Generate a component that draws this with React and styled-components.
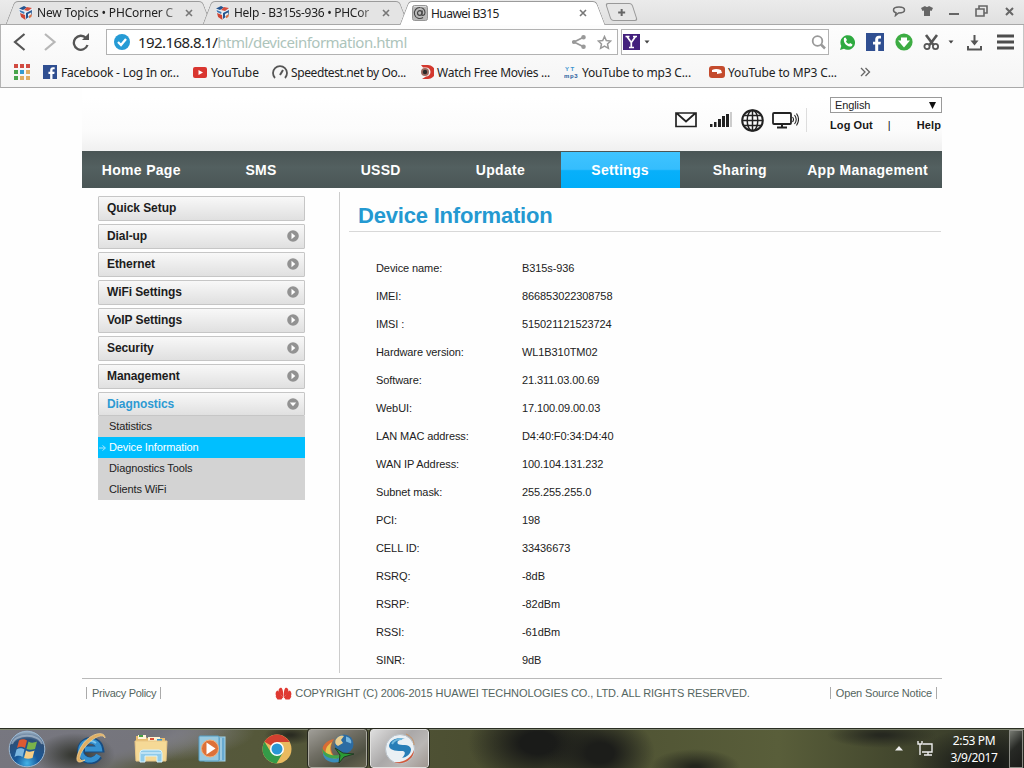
import React from 'react';
import styled, { createGlobalStyle, css } from 'styled-components';

const Global = createGlobalStyle`
  * { box-sizing: border-box; }
  body { margin: 0; background: #fff; overflow: hidden; }
  svg { display: block; flex: none; }
`;

const Screen = styled.div`
  width: 1024px; height: 768px; display: flex; flex-direction: column;
  background: #fefefe; font-family: "Liberation Sans", Arial, sans-serif; color: #222;
  white-space: nowrap;
`;

/* ---------- browser window ---------- */
const ui = css`font-family: "Noto Sans", "Open Sans", sans-serif;`;

const TabStrip = styled.div`
  ${ui}
  height: 25px; flex: none; display: flex; align-items: flex-start; padding-left: 10px;
  background: linear-gradient(#ebebeb, #e0e0e0); border-bottom: 1px solid #a8a8a8;
`;
const Tab = styled.div`
  position: relative; z-index: ${p => (p.$active ? 2 : 1)};
  width: 197px; height: ${p => (p.$active ? 25 : 24)}px; flex: none;
  display: flex; align-items: center; padding: 1px 14px 0 8px;
  font-size: 12px; letter-spacing: ${p => p.$ls || 0}px; color: #222;
  &::before, &::after {
    content: ""; position: absolute; z-index: -1; top: 1px; bottom: 0; border-top: 1px solid #9b9b9b;
    background: ${p => (p.$active ? '#fff' : '#e4e4e4')};
  }
  &::before { left: 0; right: 40%; transform: skewX(-21deg); border-left: 1px solid #9b9b9b; border-top-left-radius: 4px; }
  &::after { right: 0; left: 40%; transform: skewX(21deg); border-right: 1px solid #9b9b9b; border-top-right-radius: 4px; }
`;
const TabTitle = styled.span`
  margin-left: 3px; flex: 1; overflow: hidden;
  ${p => p.$fade && css`
    mask-image: linear-gradient(90deg, #000 83%, rgba(0,0,0,.3) 96%, transparent);
  `}
`;
const NewTab = styled.div`
  width: 27px; height: 18px; margin: 3px 0 0 7px; border: 1px solid #999; border-radius: 3px;
  transform: skewX(18deg); background: #e6e6e6; display: grid; place-items: center;
  svg { transform: skewX(-18deg); }
`;
const WindowButtons = styled.div`
  margin-left: auto; display: flex; align-items: center; gap: 15px; padding: 5px 7px 0 0;
`;
const Toolbar = styled.div`
  ${ui}
  height: 63px; flex: none; background: linear-gradient(#fdfdfd, #f5f5f5);
  border-left: 1px solid #b4b4b4; border-right: 1px solid #c6c6c6; border-bottom: 1px solid #a9a9a9;
`;
const NavRow = styled.div`
  height: 34px; display: flex; align-items: center; padding-left: 11px;
`;
const NavButtons = styled.div`display: flex; gap: 14px; width: 94px;`;
const Field = styled.div`
  width: ${p => p.$w}px; height: 26px; flex: none; margin-right: ${p => p.$mr}px;
  border: 1px solid #b2b2b2; background: #fff; display: flex; align-items: center; padding: 0 ${p => p.$pr || 5}px 0 ${p => p.$pl}px;
`;
const Url = styled.span`
  font-size: 15px; margin-left: 8px; flex: 1; letter-spacing: -.58px; color: #222;
  span { color: #adc4bb; letter-spacing: -.5px; }
`;
const FieldActions = styled.div`display: flex; align-items: center; gap: 11px;`;
const EngineCaret = styled.div`flex: 1; padding-left: 4px;`;
const ToolIcons = styled.div`display: flex; align-items: center; flex: 1; padding-left: 3px;`;
const Slot = styled.span`width: ${p => p.$w}px; flex: none; display: flex;`;
const Bookmarks = styled.div`
  height: 26px; display: flex; align-items: center; padding-left: 12px; font-size: 12px; color: #222;
`;
const Bookmark = styled.div`
  width: ${p => p.$w}px; flex: none; display: flex; align-items: center; gap: ${p => p.$gap || 4}px;
  letter-spacing: ${p => p.$ls || 0}px;
`;

/* ---------- router page ---------- */
const Page = styled.main`width: 860px; height: 640px; flex: none; margin-left: 82px; display: flex; flex-direction: column;`;
const Header = styled.header`
  height: 63px; flex: none; display: flex; justify-content: flex-end;
  background: linear-gradient(#fff 15%, #fbfbfb 70%, #f0f0f0);
`;
const StatusIcons = styled.div`
  display: flex; align-items: center; width: 132px; height: 24px; margin: 20px 23px 0 0; border-right: 1px solid #ddd;
`;
const HeaderLinks = styled.div`width: 112px; padding-top: 9px;`;
const Select = styled.div`
  height: 16px; border: 1px solid #9a9a9a; display: flex; align-items: center; justify-content: space-between;
  padding: 0 5px 0 4px; font-size: 11px; letter-spacing: -.1px; color: #222; background: #fff;
`;
const LinkLine = styled.div`
  display: flex; justify-content: space-between; font-size: 11px; font-weight: bold; color: #181818;
  margin-top: 6px; padding-right: 1px; letter-spacing: .1px;
  i { font-style: normal; font-weight: normal; margin: 0 10px 0 -1px; }
`;
const Menu = styled.nav`
  height: 37px; flex: none; display: flex; background: linear-gradient(#4a5555, #536060 45%, #4a5656);
`;
const MenuItem = styled.div`
  width: ${p => p.$w || 119.7}px; display: flex; align-items: center; justify-content: center; padding-right: 1px;
  font-size: 14px; font-weight: bold; color: #fff; letter-spacing: .3px;
  ${p => p.$active && css`margin-top: 1px; background: linear-gradient(#3fc4ff, #35bdfd 48%, #08b0fa 52%, #00adf8);`}
`;
const Body = styled.div`height: 485px; flex: none; display: flex; padding-top: 4px;`;
const Sidebar = styled.aside`
  width: 258px; height: 481px; flex: none; border-right: 1px solid #ccc; padding: 4px 34px 0 16px;
`;
const SideItem = styled.div`
  height: ${p => (p.$open ? 24 : 25)}px; margin-bottom: ${p => (p.$open ? 0 : 3)}px; border: 1px solid #c6c6c6; border-radius: 1px;
  background: linear-gradient(#f8f8f8, #e0e0e0);
  display: flex; align-items: center; justify-content: space-between; padding: 0 5px ${p => (p.$open ? 0 : 1)}px 8px;
  font-size: 12px; font-weight: bold; letter-spacing: -.08px; color: ${p => (p.$open ? '#2d9ad3' : '#1c1c1c')};
`;
const SubItem = styled.div`
  position: relative; height: 21px; background: ${p => (p.$active ? '#00bfff' : '#d3d3d3')};
  color: ${p => (p.$active ? '#fff' : '#222')}; font-size: 11px; letter-spacing: -.12px; line-height: 21px; padding-left: 11px;
  svg { position: absolute; left: 1px; top: 7px; }
`;
const Content = styled.section`flex: 1; padding: 0 1px 0 9px;`;
const Title = styled.h1`
  margin: 0; height: 40px; line-height: 48px; padding-left: 9px; border-bottom: 1px solid #d8d8d8;
  font-size: 22px; color: #2499d1; letter-spacing: -.2px;
`;
const Info = styled.dl`
  margin: 22px 0 0 27px; display: grid; grid-template-columns: 146px 1fr; grid-auto-rows: 28px;
  align-items: center; font-size: 11px; letter-spacing: -.09px; color: #222;
  dt, dd { margin: 0; }
`;
const Footer = styled.footer`
  margin-top: 5px; height: 29px; border-top: 1px solid #b9b9b9; display: flex; align-items: center;
  padding: 0 5px 0 4px; font-size: 11px; color: #55655f;
`;
const FooterLink = styled.span`
  border: solid #aaa; border-width: 0 1px; padding: 0 4px 0 5px; line-height: 12px; letter-spacing: ${p => p.$ls}px;
`;
const Copyright = styled.span`
  flex: 1; display: flex; align-items: center; gap: 3px; padding-left: 114px; letter-spacing: -.08px;
`;

/* ---------- taskbar ---------- */
const Taskbar = styled.div`
  height: 40px; flex: none; display: flex; align-items: center; border-top: 1px solid #2b2e24;
  box-shadow: inset 0 1px #838975;
  background:
    radial-gradient(ellipse 55px 40px at 600px 24px, #1c1d1a 25%, transparent),
    radial-gradient(ellipse 70px 44px at 538px 14px, #1a1b19 25%, transparent),
    radial-gradient(ellipse 75px 38px at 985px 36px, #191b18 20%, transparent),
    radial-gradient(ellipse 55px 13px at 882px 6px, #262820 10%, transparent),
    radial-gradient(ellipse 45px 18px at 695px 38px, #24261d 10%, transparent),
    radial-gradient(ellipse 26px 10px at 290px 6px, #2b2c22 10%, transparent),
    radial-gradient(ellipse 40px 22px at 75px 26px, #373933 10%, transparent),
    linear-gradient(155deg, #777780 0, #75757c 70px, transparent 100px),
    radial-gradient(ellipse 120px 32px at 135px 2px, #85858a 35%, transparent),
    linear-gradient(90deg, #5a5a43, #55583a 25%, #4a4d30 50%, #595e3a 76%, #42462d 88%, #33362a);
`;
const TaskSlot = styled.div`width: ${p => p.$w}px; height: 40px; flex: none; display: grid; place-items: center;`;
const TaskButton = styled.div`
  width: 59px; height: 39px; flex: none; margin-right: 3px; border: 1px solid ${p => (p.$active ? '#e0e0de' : '#aaa99e')};
  outline: 1px solid #27281f; outline-offset: 0; border-radius: 3px; display: grid; place-items: center;
  background: ${p => (p.$active
    ? 'linear-gradient(135deg, #dedede, #aaa8a8 45%, #bab7b5 70%, #9f9690)'
    : 'linear-gradient(150deg, #a09e98, #716f65 40%, #4f5142 75%, #676550)')};
`;
const Tray = styled.div`margin-left: auto; display: flex; align-items: center; height: 39px;`;
const TrayCaret = styled.div`width: 22px;`;
const Clock = styled.div`
  ${ui}
  width: 70px; text-align: center; color: #fff; font-size: 12px; line-height: 17px; letter-spacing: -.4px; margin: 1px 0 0 4px;
`;
const ShowDesktop = styled.div`
  width: 14px; height: 38px; margin-right: 1px; border: 1px solid #8c8d86; background: linear-gradient(135deg, #777a72, #272925 45%, #1a1b18);
`;

/* ---------- icons ---------- */
const Cube = () => (
  <svg width="16" height="16" viewBox="0 0 16 16">
    <path d="M1 4 8 1l7 2-1 9-6 3-6-3z" fill="#e8edf3" />
    <path d="M1 3.5 6 1l3 1.5L5 5zM8 8l6-3-.5 5L8 14z" fill="#24548f" />
    <path d="m9 2 5 1-4 3-4-1z" fill="#d7503f" /><path d="m2 8 5 2 .5 5L3 12z" fill="#ce4634" />
    <path d="m1.5 5 5 2-.4 2-4-2z" fill="#3f79b4" /><path d="m10 9 3-1.500v2L10 12z" fill="#eee" />
    <path d="m11 11 3-2-.6 3-2.400 1.200z" fill="#dc7142" />
  </svg>
);
const AtIcon = () => (
  <svg width="16" height="16" viewBox="0 0 16 16" fill="none">
    <rect x=".5" y=".5" width="15" height="15" rx="2" fill="#b9b9b9" stroke="#969696" />
    <circle cx="7.800" cy="8" r="2.300" stroke="#444" strokeWidth="1.200" />
    <path d="M10.300 5.500 9.800 9.500c0 1.800 3.200 1 3.200-2C13 4.500 10.700 2.500 8 2.500a5.500 5.500 0 1 0 3 10" stroke="#444" strokeWidth="1.100" />
    <path d="M2 1.500h12" stroke="#ddd" />
  </svg>
);
const Close = () => (
  <svg width="8" height="8" viewBox="0 0 8 8"><path d="m1 1 6 6M7 1 1 7" stroke="#777" strokeWidth="1.6" /></svg>
);
const FbIcon = ({ s }) => (
  <svg width={s} height={s} viewBox="0 0 18 18">
    <rect width="18" height="18" fill="#304f91" />
    <path d="M9.200 18v-6.500H7V8.700h2.200V6.600c0-2.500 1.400-3.800 3.700-3.800H15v2.600h-1.400c-1.100 0-1.400.5-1.400 1.400v1.900h2.700l-.4 2.800h-2.300V18z" fill="#fff" />
  </svg>
);
const Caret = () => <svg width="6" height="4" viewBox="0 0 6 4"><path d="M.5.5h5L3 3.500z" fill="#444" /></svg>;
const Arrow = ({ down }) => (
  <svg width="12" height="12" viewBox="0 0 12 12"><circle cx="6" cy="6" r="5.800" fill="#929292" />
    <path d={down ? 'M2.800 4.500h6.400L6 8.300z' : 'M4.500 2.800v6.400L8.300 6z'} fill="#fff" /></svg>
);
const MediaPlayer = () => (
  <svg width="28" height="28" viewBox="0 0 28 28">
    <rect x="7" y="2" width="20" height="24" fill="#68a9cf" stroke="#a6d5ea" />
    <path d="M23 3v22" stroke="#d2eaf2" /><rect x="1" y="1" width="20" height="25" rx="1" fill="#99c9df" stroke="#549ec4" />
    <circle cx="12" cy="13.500" r="8.500" fill="#dd7138" stroke="#f1b07a" /><path d="m8.500 7.500 9 6-9 6z" fill="#fff" />
  </svg>
);
const Explorer = () => (
  <svg width="34" height="31" viewBox="0 0 34 31">
    <path d="M2 3h9l2 2h18v22H2z" fill="#e8bd70" /><path d="M4 2h8v4H4z" fill="#fff5da" /><path d="M5 2h4v2H5z" fill="#47a146" />
    <path d="M14 4h12v4H14z" fill="#fff3d0" /><path d="M16 5h4v2h-4z" fill="#d85138" /><path d="M23 6h5v2h-5z" fill="#3693cf" />
    <path d="M1 8h32l-1 20H2z" fill="#f5d996" stroke="#e9c786" /><path d="M6 29V20q0-3 3-3h16q3 0 3 3v9h-5v-6H11v6z" fill="#90cbea" stroke="#d8f3fc" />
    <path d="M7 20h20" stroke="#eaf9ff" />
  </svg>
);
const IE = () => (
  <svg width="34" height="34" viewBox="0 0 34 34" fill="none">
    <path d="M27 24a10 10 0 1 1 1.500-7H12" stroke="#174c82" strokeWidth="7" />
    <path d="M26.500 23a9.500 9.500 0 1 1 1-6H13" stroke="#3691d0" strokeWidth="5" />
    <path d="M12 11a10 10 0 0 1 12 0" stroke="#7cc4ec" strokeWidth="2" />
    <path d="M33 6C33-2 17 1 9 15 3 26 3 34 13 28 6 30 6 24 13 15 21 5 31 1 33 6" fill="#e0ae62" stroke="#f2cf90" strokeWidth=".8" />
  </svg>
);
const Start = () => (
  <svg width="38" height="38" viewBox="0 0 38 38">
    <defs><radialGradient id="orb" cx=".5" cy=".9" r=".9"><stop offset="0" stopColor="#44b3e8" /><stop offset=".35" stopColor="#17599b" /><stop offset=".75" stopColor="#2d4f78" /><stop offset="1" stopColor="#a5b8c9" /></radialGradient></defs>
    <circle cx="19" cy="19" r="17.800" fill="url(#orb)" stroke="#9bb9d4" />
    <path d="M11 10.500c3-2 6-1 8 0l-2 7.500c-3-2-6-1-8 0z" fill="#dd5a32" /><path d="M20.500 11.500c3 2 6 1 8.500 0l-2 7.500c-3 1-6 1-8.500 0z" fill="#79b24b" />
    <path d="M8.500 19.500c3-2 6-1 8 0l-2 7.500c-3-2-6-1-8 0z" fill="#7bb6df" /><path d="M18 20.500c3 2 6 1 8.500 0l-2 7.500c-3 1-6 1-8.500 0z" fill="#f6cd84" />
    <path d="M4 14C7 3 31 3 34 14" fill="none" stroke="#cbd8e1" strokeOpacity=".5" strokeWidth="2" />
  </svg>
);
const Chrome = () => (
  <svg width="30" height="30" viewBox="0 0 30 30">
    <circle cx="15" cy="15" r="14.500" fill="#e9ba60" />
    <path d="M15 15 2.500 7.700A14.500 14.500 0 0 1 27.600 8H15z" fill="#d2402f" />
    <path d="M2.500 7.700A14.500 14.500 0 0 0 14.500 29.500L21 18.500 15 15 9 18.500z" fill="#349a48" />
    <circle cx="15" cy="15" r="7" fill="#fff" /><circle cx="15" cy="15" r="5.500" fill="#2a97d4" />
  </svg>
);
const Idm = () => (
  <svg width="34" height="30" viewBox="0 0 34 30">
    <path d="M13 5C2 7-1 16 3 22c3 5 10 6 15 4-7-4-11-12-5-21" fill="#d86c35" />
    <path d="M11 8C5 12 3 17 6 22c3 4 8 5 12 4-8-4-11-10-7-18" fill="#e9c44f" />
    <path d="M2 17c2 6 9 8 16 7v4C8 30 1 25 2 17" fill="#398ebc" /><path d="M1 14c3 6 9 8 17 7v3C8 26 1 22 1 14" fill="#41a44d" />
    <circle cx="23" cy="10" r="9.500" fill="#2c6ca3" /><path d="M14.500 6c3-5 7-5 8.500-4l-3 4 2 3-5 3c-3-2-3-3-2.500-6" fill="#e8ce91" />
    <path d="M25 2.500c4 1 6 4 5 7l-5-2z" fill="#79b8e0" />
    <path d="m14 14 8 5 11 1-10 3-5 6 1-8z" fill="#2b9a34" stroke="#203c24" />
  </svg>
);
const Ball = () => (
  <svg width="32" height="32" viewBox="0 0 32 32">
    <circle cx="16" cy="16" r="14.500" fill="#eaf0f4" stroke="#b9c1c8" />
    <path d="M5 13C6 6 14 4 21 6c-5 0-9 2-7 5 2 2 12-1 13 5 0 5-4 8-9 9 3-3 4-6 1-7-5 0-13 0-14-5" fill="#287eb7" />
    <path d="M8 11c2-4 7-5 10-5" stroke="#71b9dd" strokeWidth="2" fill="none" />
    <path d="M30 17c0 10-12 16-20 12 10 1 17-4 20-12" fill="#d05b3d" /><path d="M22 1c5 2 8 6 8 11" stroke="#c89264" fill="none" />
  </svg>
);
const Huawei = () => (
  <svg width="17" height="13" viewBox="0 0 17 13" fill="#df3932">
    <path d="M8.200 10.500C8.500 5 7.500 1.200 6.200.8 4 .8 3 3 4 5.500zM8.800 10.500C8.500 5 9.500 1.200 10.800.8 13 .8 14 3 13 5.500z" />
    <path d="M8 11C6 7 4 4 2.200 3.500-.2 5.500 0 9.500 3.500 11zM9 11C11 7 13 4 14.800 3.500c2.400 2 2.200 6-1.300 7.500z" />
    <path d="M8 10 4 8 .5 9.500 2.500 12.500H6.500zM9 10l4-2 3.500 1.500-2 3H10.500z" />
  </svg>
);

const sections = ['Quick Setup', 'Dial-up', 'Ethernet', 'WiFi Settings', 'VoIP Settings', 'Security', 'Management'];
const details = [
  ['Device name:', 'B315s-936'], ['IMEI:', '866853022308758'], ['IMSI :', '515021121523724'],
  ['Hardware version:', 'WL1B310TM02'], ['Software:', '21.311.03.00.69'], ['WebUI:', '17.100.09.00.03'],
  ['LAN MAC address:', 'D4:40:F0:34:D4:40'], ['WAN IP Address:', '100.104.131.232'], ['Subnet mask:', '255.255.255.0'],
  ['PCI:', '198'], ['CELL ID:', '33436673'], ['RSRQ:', '-8dB'], ['RSRP:', '-82dBm'], ['RSSI:', '-61dBm'], ['SINR:', '9dB'],
];

export default function App() {
  return (
    <Screen>
      <Global />
      <TabStrip>
        <Tab $ls={-0.17}><Cube /><TabTitle $fade>New Topics • PHCorner C</TabTitle><Close /></Tab>
        <Tab $ls={-0.28}><Cube /><TabTitle $fade>Help - B315s-936 • PHCor</TabTitle><Close /></Tab>
        <Tab $active $ls={-0.55}><AtIcon /><TabTitle>Huawei B315</TabTitle><Close /></Tab>
        <NewTab><svg width="9" height="9"><path d="M4.500 1v7M1 4.500h7" stroke="#666" strokeWidth="2" /></svg></NewTab>
        <WindowButtons>
          <svg width="14" height="12" fill="none"><path d="M7 2C3 2 1.500 3.500 1.500 5S3 7.500 4 7.800L3.500 10.500l3-2.500C10 8 12.500 7 12.500 5S10 2 7 2z" stroke="#666" strokeWidth="1.500" /></svg>
          <svg width="12" height="12" fill="#666"><path d="M4 1q2 2 4 0l4 2-1.500 3-1.500-.5V11H3V5.500L1.500 6 0 3z" /></svg>
          <svg width="12" height="12"><path d="M1 9h10" stroke="#666" strokeWidth="2" /></svg>
          <svg width="13" height="12" fill="none" stroke="#666" strokeWidth="1.600"><path d="M4 4V1h8v7H9M1 4h8v7H1z" /></svg>
          <svg width="14" height="12"><path d="m3 3 7 7M10 3l-7 7" stroke="#666" strokeWidth="2" /></svg>
        </WindowButtons>
      </TabStrip>

      <Toolbar>
        <NavRow>
          <NavButtons>
            <svg width="14" height="18" fill="none"><path d="M12.500 1 3 9l9.500 8" stroke="#555" strokeWidth="2.200" /></svg>
            <svg width="18" height="18" fill="none"><path d="m5 1 9.500 8L5 17" stroke="#b7b7b7" strokeWidth="2.200" /></svg>
            <svg width="18" height="18" fill="none"><path d="M14 5A7 7 0 1 0 15.500 12" stroke="#555" strokeWidth="2.300" /><path d="M10 7h7V0z" fill="#555" /></svg>
          </NavButtons>
          <Field $w={512} $mr={3} $pl={7} $pr={5}>
            <svg width="16" height="16"><circle cx="8" cy="8" r="8" fill="#269bd5" /><path d="m4 8 3 3 5-6" fill="none" stroke="#fff" strokeWidth="2.300" /></svg>
            <Url>192.168.8.1/<span>html/deviceinformation.html</span></Url>
            <FieldActions>
              <svg width="14" height="14" stroke="#999" fill="#999" strokeWidth="1.800"><path d="M12 2 2 7l10 5" fill="none" /><circle cx="11.500" cy="2.300" r="1.400" /><circle cx="2" cy="7" r="1.200" /><circle cx="11.500" cy="11.700" r="1.400" /></svg>
              <svg width="15" height="15" fill="none"><path d="m7.500 1.500 1.800 4 4.400.5-3.200 3 .9 4.400-3.900-2.200-3.900 2.200.9-4.400-3.200-3 4.400-.5z" stroke="#999" strokeWidth="1.500" /></svg>
            </FieldActions>
          </Field>
          <Field $w={208} $mr={7} $pl={1} $pr={2}>
            <svg width="17" height="16" viewBox="0 0 17 16"><rect width="17" height="16" fill="#43207d" /><path d="M2.500 2.500h4M10 2.500h4M4 2.500l4.300 6v5M12.500 2.500l-4.200 6M6 13.500h5" fill="none" stroke="#fff" strokeWidth="1.700" /></svg>
            <EngineCaret><Caret /></EngineCaret>
            <svg width="15" height="15" fill="none" stroke="#999"><circle cx="6.500" cy="6" r="4.800" strokeWidth="1.800" /><path d="m10 9.500 4 4" strokeWidth="2.500" /></svg>
          </Field>
          <ToolIcons>
            <Slot $w={27}><svg width="17" height="17"><path d="M1 16 2.300 12A7.300 7.300 0 1 1 5 14.800z" fill="#2eaa40" /><path d="M5 4 6.500 3.500 8 6 7 7.200C7.500 8.500 8.500 9.500 10 10l1.200-1 2.300 1.500c0 1.500-1.500 2.300-2.700 2C7 12 4 8.500 5 4" fill="#fff" /></svg></Slot>
            <Slot $w={29}><FbIcon s={18} /></Slot>
            <Slot $w={28}><svg width="18" height="18"><circle cx="9" cy="9" r="8.600" fill="#3dac43" /><path d="M6 4.500h6v3h3l-6 7-6-7h3z" fill="#fff" /></svg></Slot>
            <Slot $w={25}><svg width="17" height="17" fill="none" stroke="#555"><path d="m3 1 7.500 10M14 1 6.500 11" strokeWidth="2.600" /><circle cx="4" cy="12.500" r="2.600" strokeWidth="1.800" /><circle cx="12.500" cy="12.500" r="2.600" strokeWidth="1.800" /></svg></Slot>
            <Slot $w={19}><Caret /></Slot>
            <Slot $w={30}><svg width="15" height="17" stroke="#555" strokeWidth="2" fill="none"><path d="M7.500 1v9M1 12v3.500h13V12" /><path d="M3.500 6.500h8l-4 5z" fill="#555" stroke="none" /></svg></Slot>
            <svg width="17" height="16"><path d="M0 2h17M0 8h17M0 14h17" stroke="#4d4d4d" strokeWidth="2.800" /></svg>
          </ToolIcons>
        </NavRow>
        <Bookmarks>
          <Bookmark $w={30}><svg width="18" height="18" viewBox="0 0 18 18">{['#d14b42', '#d14b42', '#d14b42', '#48a54c', '#349bd0', '#dfad64', '#48a54c', '#dfad64', '#dfad64'].map((c, i) => <rect key={i} x={1 + i % 3 * 6} y={1 + Math.floor(i / 3) * 6} width="4" height="4" fill={c} />)}</svg></Bookmark>
          <Bookmark $w={150} $ls={-0.2}><FbIcon s={14} />Facebook - Log In or...</Bookmark>
          <Bookmark $w={79} $ls={-0.1} $gap={3}><svg width="15" height="11"><rect width="14" height="11" rx="2" fill="#d93630" /><path d="m5.500 3 4.500 2.500L5.500 8z" fill="#fff" /></svg>YouTube</Bookmark>
          <Bookmark $w={147} $ls={-0.4} $gap={3}><svg width="16" height="15" fill="none" stroke="#555"><path d="M3 13A7 7 0 1 1 13 13" strokeWidth="1.800" /><path d="m8 10 3-5" strokeWidth="2" /></svg>Speedtest.net by Oo...</Bookmark>
          <Bookmark $w={145} $ls={-0.25} $gap={3}><svg width="15" height="16"><path d="M2 1h7a6.500 6.500 0 0 1 0 14H3l4-2.500a4.500 4.500 0 0 0 0-9H4z" fill="#d3382e" /><circle cx="6" cy="8" r="4" fill="#9b6a60" /><circle cx="6" cy="8" r="2.200" fill="#2a2a2a" /></svg>Watch Free Movies ...</Bookmark>
          <Bookmark $w={145} $ls={-0.17} $gap={3}><svg width="15" height="15" fontFamily="Liberation Sans" fontWeight="bold"><text x="1" y="6" fontSize="6" letterSpacing="1.500" fill="#3a94cf">YT</text><text x="0" y="13" fontSize="6" letterSpacing=".6" fill="#275c9c">mp3</text></svg>YouTube to mp3 C...</Bookmark>
          <Bookmark $w={151} $ls={-0.15} $gap={3}><svg width="16" height="12"><rect width="16" height="12" rx="3" fill="#c44b2d" /><path d="M3 4q4-2 9 0l1 3-5 1V6H3z" fill="#fff" /></svg>YouTube to MP3 C...</Bookmark>
          <svg width="11" height="10" fill="none"><path d="m1 1 4 4-4 4M5.500 1l4 4-4 4" stroke="#666" strokeWidth="1.300" /></svg>
        </Bookmarks>
      </Toolbar>

      <Page>
        <Header>
          <StatusIcons>
            <Slot $w={35}><svg width="22" height="16" fill="none" stroke="#222" strokeWidth="1.700"><path d="M1 1h20v13.500H1zM2 1.500l9 8 9-8" /></svg></Slot>
            <Slot $w={31}><svg width="22" height="16" fill="#222"><rect y="12" width="2.500" height="3" /><rect x="4" y="10" width="2.500" height="5" /><rect x="8" y="7" width="3" height="8" /><rect x="12" y="4" width="3" height="11" /><rect x="16" y="2" width="3" height="13" /><rect x="20" width="2" height="15" fill="#ccc" /></svg></Slot>
            <Slot $w={31}><svg width="23" height="23" fill="none" stroke="#222" strokeWidth="1.500"><circle cx="11.500" cy="11.500" r="10.300" strokeWidth="2" /><ellipse cx="11.500" cy="11.500" rx="5.300" ry="10.300" /><path d="M11.500 1v21M1 11.500h21M3 6.500h17M3 16.500h17" /></svg></Slot>
            <svg width="27" height="18" fill="none" stroke="#222"><rect x="1" y="2" width="18" height="11" rx="1" strokeWidth="1.800" /><path d="M10 13v3M5 16.500h10" strokeWidth="2" /><path d="M20.500 6q2 2.500 0 5M22.500 4q3.500 4.500 0 9M24.500 2.500q4 6 0 12" strokeWidth="1.100" /></svg>
          </StatusIcons>
          <HeaderLinks>
            <Select>English<svg width="7" height="7"><path d="M0 0h7L3.500 7z" fill="#111" /></svg></Select>
            <LinkLine><span>Log Out</span><i>|</i><span>Help</span></LinkLine>
          </HeaderLinks>
        </Header>
        <Menu>
          {['Home Page', 'SMS', 'USSD', 'Update', 'Settings', 'Sharing'].map(m => <MenuItem key={m} $active={m === 'Settings'}>{m}</MenuItem>)}
          <MenuItem $w={136}>App Management</MenuItem>
        </Menu>
        <Body>
          <Sidebar>
            {sections.map((s, i) => <SideItem key={s}>{s}{i > 0 && <Arrow />}</SideItem>)}
            <SideItem $open>Diagnostics<Arrow down /></SideItem>
            <SubItem>Statistics</SubItem>
            <SubItem $active><svg width="8" height="8" fill="none"><path d="M0 4h6M3.500 1.500 6.500 4l-3 2.500" stroke="#a9e6fb" /></svg>Device Information</SubItem>
            <SubItem>Diagnostics Tools</SubItem>
            <SubItem>Clients WiFi</SubItem>
          </Sidebar>
          <Content>
            <Title>Device Information</Title>
            <Info>
              {details.map(([k, v]) => <React.Fragment key={k}><dt>{k}</dt><dd>{v}</dd></React.Fragment>)}
            </Info>
          </Content>
        </Body>
        <Footer>
          <FooterLink $ls={-0.3}>Privacy Policy</FooterLink>
          <Copyright><Huawei />COPYRIGHT (C) 2006-2015 HUAWEI TECHNOLOGIES CO., LTD. ALL RIGHTS RESERVED.</Copyright>
          <FooterLink $ls={-0.16}>Open Source Notice</FooterLink>
        </Footer>
      </Page>

      <Taskbar>
        <TaskSlot $w={54}><Start /></TaskSlot>
        <TaskSlot $w={70}><IE /></TaskSlot>
        <TaskSlot $w={53}><Explorer /></TaskSlot>
        <TaskSlot $w={69}><MediaPlayer /></TaskSlot>
        <TaskSlot $w={62}><Chrome /></TaskSlot>
        <TaskButton><Idm /></TaskButton>
        <TaskButton $active><Ball /></TaskButton>
        <Tray>
          <TrayCaret><svg width="8" height="5"><path d="M0 4.500 4 0l4 4.500z" fill="#eee" /></svg></TrayCaret>
          <svg width="18" height="18" fill="none" stroke="#eee" strokeWidth="1.400"><path d="M6 4h9v8H5M7 15h8M11 12v3M3 6v9M1 1v3h4V1M3 4v3" /></svg>
          <Clock>2:53 PM<br />3/9/2017</Clock>
          <ShowDesktop />
        </Tray>
      </Taskbar>
    </Screen>
  );
}
